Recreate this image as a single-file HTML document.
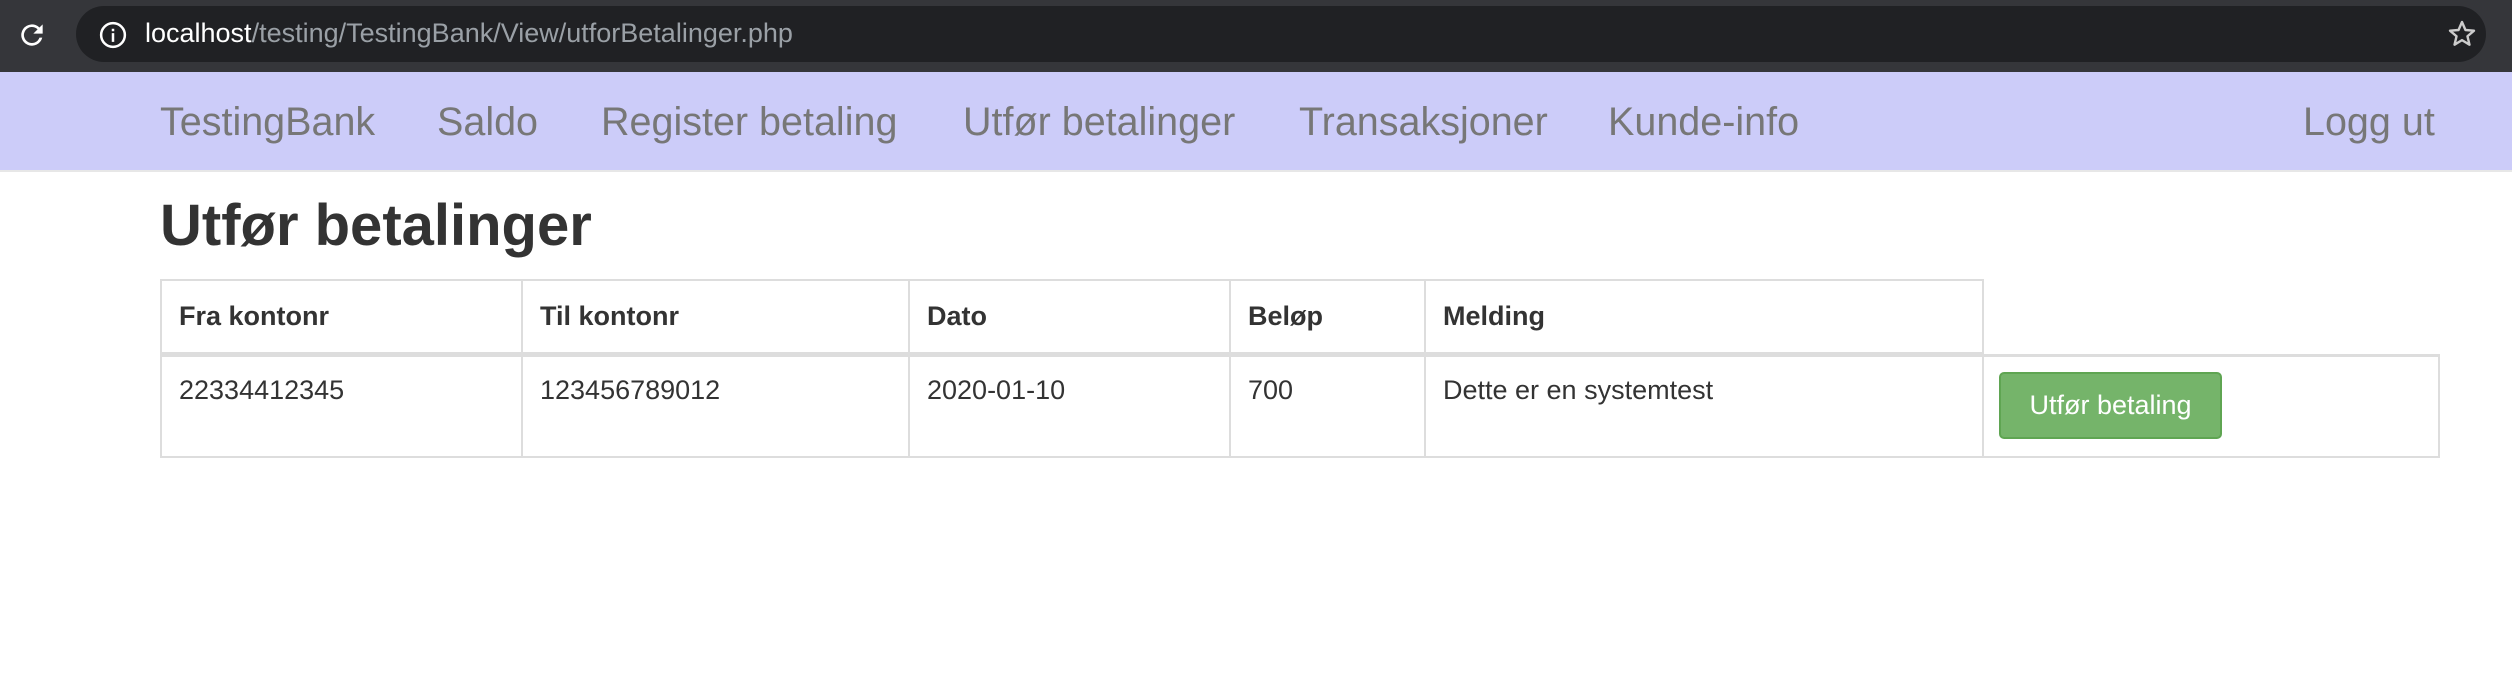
<!DOCTYPE html>
<html><head><meta charset="utf-8"><style>
*{margin:0;padding:0;box-sizing:border-box}
body{width:2512px;height:692px;background:#fff;font-family:"Liberation Sans",Arial,sans-serif;position:relative;overflow:hidden}
.tb{position:absolute;left:0;top:0;width:2512px;height:72px;background:#35363a}
.pill{position:absolute;left:76px;top:6px;width:2410px;height:56px;background:#202124;border-radius:28px}
.url{position:absolute;left:145px;top:16px;font-size:27px;color:#9aa0a6;white-space:nowrap;line-height:34px}
.url b{font-weight:normal;color:#fff}
.nav{position:absolute;left:0;top:72px;width:2512px;height:100px;background:#ccccf9;border-bottom:2px solid #e7e7e7}
.nav span{position:absolute;top:28px;font-size:39.5px;color:#777;line-height:44px;white-space:nowrap}
h1{position:absolute;left:160px;top:193px;font-size:58px;font-weight:bold;color:#333;line-height:66px}
.c{position:absolute;border:2px solid #ddd;font-size:27px;color:#333;padding:0 17px;white-space:nowrap}
.h{font-weight:bold}
.btn{position:absolute;left:1999px;top:372px;width:223px;height:67px;background:#75b46a;border:2px solid #5fa552;border-radius:5px;color:#fff;font-size:27px;text-align:center;line-height:62px}
</style></head><body>
<div class="tb"><div class="pill"></div>
<svg style="position:absolute;left:16px;top:19px" width="32" height="32" viewBox="0 0 24 24"><path d="M17.6 6.4A8 8 0 1 0 19.7 14h-2.1a6 6 0 1 1-1.4-6.2L13 11h7V4z" fill="#fff"/></svg>
<svg style="position:absolute;left:98px;top:20px" width="30" height="30" viewBox="0 0 24 24"><circle cx="12" cy="12" r="9.5" fill="none" stroke="#fff" stroke-width="2"/><rect x="11" y="10.5" width="2" height="7" fill="#fff"/><rect x="11" y="7" width="2" height="2" fill="#fff"/></svg>
<div class="url"><b>localhost</b>/testing/TestingBank/View/utforBetalinger.php</div>
<svg style="position:absolute;left:2446px;top:18px" width="32" height="32" viewBox="0 0 24 24"><path d="M12 3l2.6 6 6.4.5-4.9 4.2 1.5 6.3L12 16.6 6.4 20l1.5-6.3L3 9.5 9.4 9z" fill="none" stroke="#ccc" stroke-width="1.8" stroke-linejoin="round"/></svg>
</div>
<div class="nav">
<span style="left:160px">TestingBank</span>
<span style="left:437px">Saldo</span>
<span style="left:601px">Register betaling</span>
<span style="left:963px">Utfør betalinger</span>
<span style="left:1299px">Transaksjoner</span>
<span style="left:1608px">Kunde-info</span>
<span style="left:2303px">Logg ut</span>
</div>
<h1>Utfør betalinger</h1>
<div class="c h" style="left:160px;top:279px;width:363px;height:75px;line-height:71px">Fra kontonr</div>
<div class="c h" style="left:521px;top:279px;width:389px;height:75px;line-height:71px">Til kontonr</div>
<div class="c h" style="left:908px;top:279px;width:323px;height:75px;line-height:71px">Dato</div>
<div class="c h" style="left:1229px;top:279px;width:197px;height:75px;line-height:71px">Beløp</div>
<div class="c h" style="left:1424px;top:279px;width:560px;height:75px;line-height:71px">Melding</div>
<div class="c" style="left:160px;top:354px;width:363px;height:104px;border-top-width:3px;padding-top:18px">22334412345</div>
<div class="c" style="left:521px;top:354px;width:389px;height:104px;border-top-width:3px;padding-top:18px">123456789012</div>
<div class="c" style="left:908px;top:354px;width:323px;height:104px;border-top-width:3px;padding-top:18px">2020-01-10</div>
<div class="c" style="left:1229px;top:354px;width:197px;height:104px;border-top-width:3px;padding-top:18px">700</div>
<div class="c" style="left:1424px;top:354px;width:560px;height:104px;border-top-width:3px;padding-top:18px">Dette er en systemtest</div>
<div class="c" style="left:1982px;top:354px;width:458px;height:104px;border-top-width:3px"></div>
<div class="btn">Utfør betaling</div>
</body></html>
